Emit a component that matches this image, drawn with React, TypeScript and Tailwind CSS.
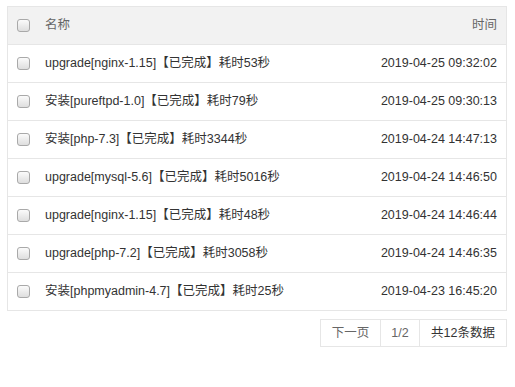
const rows = [
  { name: 'upgrade[nginx-1.15]【已完成】耗时53秒', time: '2019-04-25 09:32:02' },
  { name: '安装[pureftpd-1.0]【已完成】耗时79秒', time: '2019-04-25 09:30:13' },
  { name: '安装[php-7.3]【已完成】耗时3344秒', time: '2019-04-24 14:47:13' },
  { name: 'upgrade[mysql-5.6]【已完成】耗时5016秒', time: '2019-04-24 14:46:50' },
  { name: 'upgrade[nginx-1.15]【已完成】耗时48秒', time: '2019-04-24 14:46:44' },
  { name: 'upgrade[php-7.2]【已完成】耗时3058秒', time: '2019-04-24 14:46:35' },
  { name: '安装[phpmyadmin-4.7]【已完成】耗时25秒', time: '2019-04-23 16:45:20' },
]

function Check() {
  return (
    <span className="block h-[13px] w-[13px] shrink-0 rounded-[3px] border border-[#a9a9a9] bg-gradient-to-b from-[#fbfbfb] to-[#dedede]" />
  )
}

export default function App() {
  return (
    <div
      className="min-h-[387px] bg-white pl-[7px] pt-[6px] text-[12.5px] text-[#333]"
      style={{ fontFamily: '"Liberation Sans", "Noto Sans CJK SC", sans-serif' }}
    >
      <div className="w-[500px] border border-[#e6e6e6]">
        <div className="flex h-[37px] items-center bg-[#f2f2f2] pr-[9px] text-[#666]">
          <div className="flex w-[37px] justify-end pr-[15px]">
            <Check />
          </div>
          <span className="flex-1">名称</span>
          <span>时间</span>
        </div>
        {rows.map((r) => (
          <div key={r.time} className="flex h-[38px] items-center border-t border-[#e6e6e6] pr-[9px]">
            <div className="flex w-[37px] justify-end pr-[15px]">
              <Check />
            </div>
            <span className="flex-1">{r.name}</span>
            <span>{r.time}</span>
          </div>
        ))}
      </div>
      <div className="mt-[8px] flex w-[500px] justify-end">
        <div className="flex h-[28px] border border-[#e6e6e6]">
          <span className="flex w-[59px] items-center justify-center text-[#666]">下一页</span>
          <span className="flex w-[39px] items-center justify-center border-l border-[#e6e6e6] text-[#666]">1/2</span>
          <span className="flex w-[87px] items-center justify-center border-l border-[#e6e6e6]">共12条数据</span>
        </div>
      </div>
    </div>
  )
}
